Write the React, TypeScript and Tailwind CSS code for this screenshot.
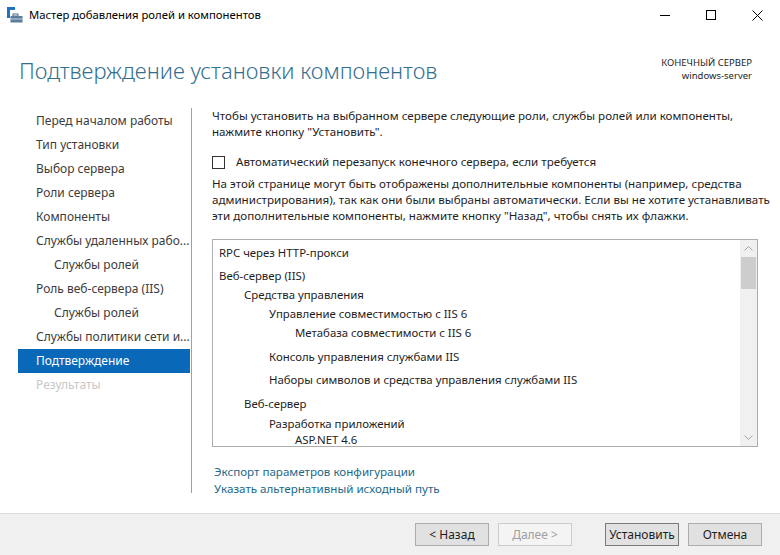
import React from 'react';

const navItems: { label: string; indent?: boolean; active?: boolean; disabled?: boolean }[] = [
    { label: 'Перед началом работы' },
    { label: 'Тип установки' },
    { label: 'Выбор сервера' },
    { label: 'Роли сервера' },
    { label: 'Компоненты' },
    { label: 'Службы удаленных рабо...' },
    { label: 'Службы ролей', indent: true },
    { label: 'Роль веб-сервера (IIS)' },
    { label: 'Службы ролей', indent: true },
    { label: 'Службы политики сети и...' },
    { label: 'Подтверждение', active: true },
    { label: 'Результаты', disabled: true },
];

// level -> left padding, gap -> margin above the row
const listItems: { label: string; pad: string; gap: string }[] = [
    { label: 'RPC через HTTP-прокси', pad: 'pl-[6px]', gap: 'mt-[5px]' },
    { label: 'Веб-сервер (IIS)', pad: 'pl-[6px]', gap: 'mt-[7px]' },
    { label: 'Средства управления', pad: 'pl-[31px]', gap: 'mt-[3px]' },
    { label: 'Управление совместимостью с IIS 6', pad: 'pl-[56px]', gap: 'mt-[3px]' },
    { label: 'Метабаза совместимости с IIS 6', pad: 'pl-[82px]', gap: 'mt-[3px]' },
    { label: 'Консоль управления службами IIS', pad: 'pl-[56px]', gap: 'mt-[8px]' },
    { label: 'Наборы символов и средства управления службами IIS', pad: 'pl-[56px]', gap: 'mt-[7px]' },
    { label: 'Веб-сервер', pad: 'pl-[31px]', gap: 'mt-[8px]' },
    { label: 'Разработка приложений', pad: 'pl-[56px]', gap: 'mt-[4px]' },
    { label: 'ASP.NET 4.6', pad: 'pl-[82px]', gap: 'mt-0' },
];

const WizardIcon = () => (
    <svg width="16" height="16" viewBox="0 0 16 16">
        <rect x="0" y="0" width="3" height="11" fill="#1f73c4" />
        <rect x="0" y="0" width="8" height="3" fill="#1f73c4" />
        <rect x="6" y="7" width="5" height="2" fill="none" stroke="#4f6f8a" strokeWidth="1" />
        <rect x="3.5" y="9" width="12" height="6.5" fill="#5b7d99" />
        <rect x="3.5" y="11.5" width="12" height="1" fill="#c9d6e0" />
    </svg>
);

const App: React.FC = () => {
    return (
        <div className="w-[780px] h-[555px] flex flex-col bg-white text-[#1e1e1e] overflow-hidden font-['Noto_Sans',sans-serif]">
            {/* title bar */}
            <div className="h-[30px] flex items-center shrink-0">
                <div className="pl-[7px] pr-[6px] flex items-center">
                    <WizardIcon />
                </div>
                <span className="text-[11.3px] text-black">Мастер добавления ролей и компонентов</span>
                <div className="ml-auto flex h-full">
                    <div className="w-[46px] flex items-center justify-center">
                        <div className="w-[10px] h-px bg-black" />
                    </div>
                    <div className="w-[46px] flex items-center justify-center">
                        <div className="w-[10px] h-[10px] border border-black" />
                    </div>
                    <div className="w-[46px] flex items-center justify-center">
                        <svg width="11" height="11" viewBox="0 0 11 11">
                            <path d="M0.5 0.5 L10.5 10.5 M10.5 0.5 L0.5 10.5" stroke="#000" strokeWidth="1" />
                        </svg>
                    </div>
                </div>
            </div>

            {/* header */}
            <div className="h-[78px] shrink-0 flex items-start px-[19px] pt-[26px]">
                <h1 className="text-[22px] font-light text-[#356f8e] leading-[28px]">Подтверждение установки компонентов</h1>
                <div className="ml-auto mr-[9px] text-right text-[9.5px] leading-[13px] text-[#1e1e1e] mt-0">
                    <div>КОНЕЧНЫЙ СЕРВЕР</div>
                    <div>windows-server</div>
                </div>
            </div>

            {/* body */}
            <div className="flex-1 flex min-h-0">
                <div className="w-[191px] shrink-0 pl-[18px] pb-[20px] flex">
                    <div className="flex-1 flex flex-col border-r border-[#a0a0a0] pt-px pr-px">
                        {navItems.map((item, i) => (
                            <div
                                key={i}
                                className={
                                    'h-[24px] flex items-center text-[12px] whitespace-nowrap ' +
                                    (item.indent ? 'pl-[36px] ' : 'pl-[18px] ') +
                                    (item.active ? 'bg-[#0a68b8] text-white' : item.disabled ? 'text-[#c8c8c8]' : 'text-[#3c3c3c]')
                                }
                            >
                                {item.label}
                            </div>
                        ))}
                    </div>
                </div>

                <div className="flex-1 min-w-0 pl-[21px] pr-[22px] flex flex-col text-[11.6px] leading-[16px]">
                    <p className="whitespace-nowrap">
                        Чтобы установить на выбранном сервере следующие роли, службы ролей или компоненты,
                        <br />
                        нажмите кнопку "Установить".
                    </p>
                    <label className="mt-[14px] flex items-center h-[16px]">
                        <span className="w-[13px] h-[13px] border border-[#333] bg-white shrink-0" />
                        <span className="ml-[11px]">Автоматический перезапуск конечного сервера, если требуется</span>
                    </label>
                    <p className="mt-[6px] whitespace-nowrap">
                        На этой странице могут быть отображены дополнительные компоненты (например, средства
                        <br />
                        администрирования), так как они были выбраны автоматически. Если вы не хотите устанавливать
                        <br />
                        эти дополнительные компоненты, нажмите кнопку "Назад", чтобы снять их флажки.
                    </p>

                    <div className="mt-[15px] h-[208px] border border-[#adadad] flex shrink-0 text-[11.4px]">
                        <div className="flex-1 overflow-hidden">
                            {listItems.map((item, i) => (
                                <div key={i} className={'whitespace-nowrap leading-[16px] ' + item.pad + ' ' + item.gap}>
                                    {item.label}
                                </div>
                            ))}
                        </div>
                        <div className="w-[17px] bg-[#f0f0f0] flex flex-col items-center">
                            <div className="h-[17px] flex items-center justify-center">
                                <svg width="9" height="5" viewBox="0 0 9 5">
                                    <path d="M0.5 4.5 L4.5 0.5 L8.5 4.5" fill="none" stroke="#a3a3a3" strokeWidth="1" />
                                </svg>
                            </div>
                            <div className="w-[15px] h-[32px] bg-[#cdcdcd]" />
                            <div className="flex-1" />
                            <div className="h-[17px] flex items-center justify-center">
                                <svg width="9" height="5" viewBox="0 0 9 5">
                                    <path d="M0.5 0.5 L4.5 4.5 L8.5 0.5" fill="none" stroke="#a3a3a3" strokeWidth="1" />
                                </svg>
                            </div>
                        </div>
                    </div>

                    <div className="mt-[16px] pl-[2px] flex flex-col items-start text-[#1c6a8a] leading-[17px]">
                        <span>Экспорт параметров конфигурации</span>
                        <span>Указать альтернативный исходный путь</span>
                    </div>
                </div>
            </div>

            {/* footer */}
            <div className="h-[42px] shrink-0 border-t border-[#dcdcdc] bg-[#f0f0f0] flex items-center justify-end pr-[18px] text-[12px]">
                <button className="w-[74px] h-[23px] bg-[#e1e1e1] border border-[#adadad] text-[#1e1e1e]">&lt; Назад</button>
                <button className="ml-[9px] w-[74px] h-[23px] bg-[#f4f4f4] border border-[#cccccc] text-[#a0a0a0]">Далее &gt;</button>
                <button className="ml-[33px] w-[74px] h-[23px] bg-[#e1e1e1] border border-[#7a7a7a] text-[#1e1e1e]">Установить</button>
                <button className="ml-[9px] w-[74px] h-[23px] bg-[#e1e1e1] border border-[#adadad] text-[#1e1e1e]">Отмена</button>
            </div>
        </div>
    );
};

export default App;
